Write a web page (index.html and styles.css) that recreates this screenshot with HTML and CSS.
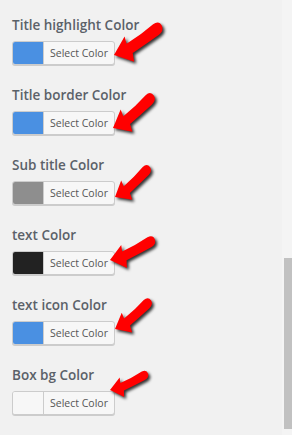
FILE: index.html
```html
<!DOCTYPE html>
<html lang="en">
<head>
    <meta charset="UTF-8">
    <meta name="viewport" content="width=device-width, initial-scale=1.0">
    <title>Color settings</title>
    <link rel="stylesheet" href="styles.css">
</head>
<body>
    <svg class="defs" width="0" height="0" aria-hidden="true">
        <defs>
            <path id="arrow" d="M0,0 L17,-13 L16,-5.5 Q33,-8 48,-13 Q55,-14.5 55.5,-8 Q55.5,-2.5 49,-1 Q33,2.5 18,5.5 L16,14 Z"/>
        </defs>
    </svg>

    <div class="panel">
        <div class="field">
            <label>Title highlight Color</label>
            <button class="picker"><span class="swatch blue"></span><span class="picker-text">Select Color</span></button>
            <svg class="arrow"><use href="#arrow" transform="translate(102,39) rotate(-23)"/></svg>
        </div>

        <div class="field">
            <label>Title border Color</label>
            <button class="picker"><span class="swatch blue"></span><span class="picker-text">Select Color</span></button>
            <svg class="arrow"><use href="#arrow" transform="translate(101,42) rotate(-30) scale(0.93)"/></svg>
        </div>

        <div class="field">
            <label>Sub title Color</label>
            <button class="picker"><span class="swatch grey"></span><span class="picker-text">Select Color</span></button>
            <svg class="arrow"><use href="#arrow" transform="translate(103,41) rotate(-32) scale(0.82)"/></svg>
        </div>

        <div class="field">
            <label>text Color</label>
            <button class="picker"><span class="swatch dark"></span><span class="picker-text">Select Color</span></button>
            <svg class="arrow"><use href="#arrow" transform="translate(98,34) rotate(-16) scale(0.88)"/></svg>
        </div>

        <div class="field">
            <label>text icon Color</label>
            <button class="picker"><span class="swatch blue"></span><span class="picker-text">Select Color</span></button>
            <svg class="arrow"><use href="#arrow" transform="translate(103,33) rotate(-30) scale(0.82)"/></svg>
        </div>

        <div class="field">
            <label>Box bg Color</label>
            <button class="picker"><span class="swatch white"></span><span class="picker-text">Select Color</span></button>
            <svg class="arrow"><use href="#arrow" transform="translate(98,24) rotate(-15) scale(0.74)"/></svg>
        </div>
    </div>

    <div class="scrollbar"><div class="thumb"></div></div>
</body>
</html>
```

FILE: styles.css
```css
body {
    margin: 0;
    background-color: #f1f1f1;
    font-family: 'Open Sans', sans-serif;
    overflow: hidden;
}

.defs {
    position: absolute;
}

.panel {
    padding: 16px 0 0 12px;
}

.field {
    position: relative;
    height: 70px;
}

.field label {
    display: block;
    font-size: 13.5px;
    font-weight: 600;
    line-height: 18px;
    color: #5b6169;
    margin-bottom: 7px;
}

.picker {
    display: flex;
    padding: 0;
    height: 24px;
    width: 103px;
    border: 1px solid #cccccc;
    border-radius: 3px;
    background-color: #f7f7f7;
    box-shadow: 0 1px 0 #cccccc;
    overflow: hidden;
    font-family: 'Open Sans', sans-serif;
    cursor: pointer;
}

.swatch {
    width: 30px;
    height: 100%;
    border-right: 1px solid #cccccc;
    flex-shrink: 0;
}

.swatch.blue { background-color: #4a90e2; }
.swatch.grey { background-color: #8e8e8e; }
.swatch.dark { background-color: #222222; }
.swatch.white { background-color: #f7f7f7; }

.picker-text {
    flex: 1;
    font-size: 10.5px;
    line-height: 22px;
    color: #555555;
    text-align: center;
}

.arrow {
    position: absolute;
    left: 0;
    top: 0;
    width: 180px;
    height: 70px;
    overflow: visible;
    pointer-events: none;
    fill: #ff0000;
    filter: drop-shadow(2px 2px 1.5px rgba(0, 0, 0, 0.8));
}

.scrollbar {
    position: fixed;
    top: 0;
    right: 0;
    width: 10px;
    height: 100%;
    background-color: #f4f4f4;
}

.thumb {
    margin: 258px 0 0 2px;
    height: 171px;
    background-color: #c1c1c1;
}
```
